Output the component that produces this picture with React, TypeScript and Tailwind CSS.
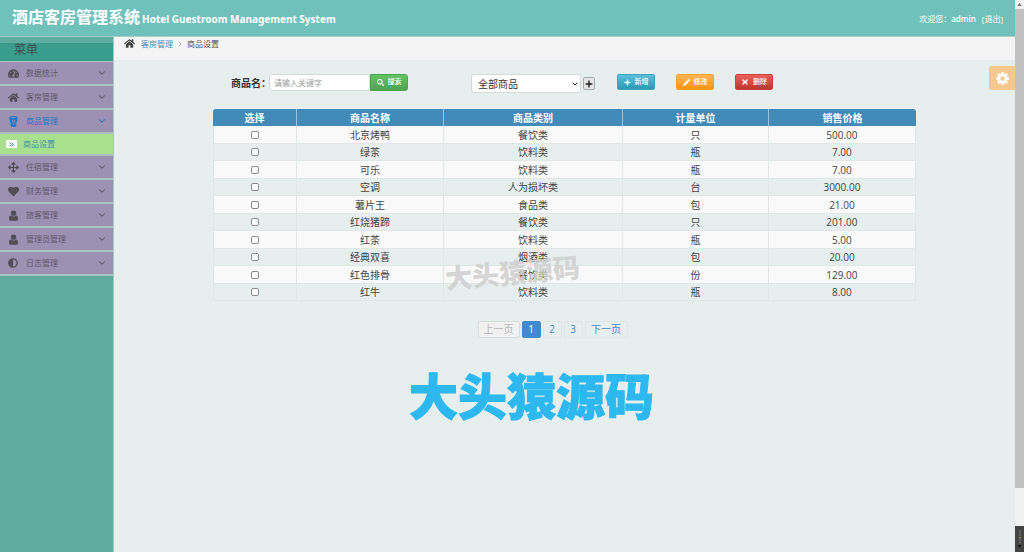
import { useState, type ReactNode } from "react";
import {
  FaAdjust,
  FaArrowsAlt,
  FaHeart,
  FaHome,
  FaPencilAlt,
  FaPlus,
  FaSearch,
  FaTachometerAlt,
  FaTimes,
} from "react-icons/fa";
import { ChevronDown, ChevronRight } from "lucide-react";

function BucketIcon() {
  return (
    <svg viewBox="0 0 22 26" className="size-[11px]" aria-hidden="true">
      <path
        fill="currentColor"
        fillRule="evenodd"
        d="M11 0C5 0 1 1.500 1 3.800c0 1 2 10.200 2.300 11.500C3.800 17 7 18.300 11 18.300s7.200-1.300 7.700-3C19 14 21 4.800 21 3.800 21 1.500 17 0 11 0Zm0 2.200c4 0 7 .8 7 1.400s-3 1.200-7 1.200-7-.6-7-1.200 3-1.400 7-1.400Zm0 5.900a3.700 3.700 0 1 1 0 7.400 3.700 3.700 0 0 1 0-7.400Z"
      />
      <circle cx="11" cy="11.800" r="2" fill="currentColor" />
      <path
        fill="currentColor"
        d="M3.500 17.500c2 1.400 4.700 2 7.500 2s5.500-.6 7.500-2l-1 5.500c-.5 1.800-3 2.800-6.500 2.800S5 24.800 4.500 23Z"
      />
    </svg>
  );
}

function UserIcon() {
  return (
    <svg viewBox="0 0 20 22" className="size-[11px]" aria-hidden="true">
      <path
        fill="currentColor"
        d="M10 1a5.500 5.500 0 0 1 5.500 5.500C15.500 9.600 13 12 10 12S4.500 9.600 4.500 6.500A5.500 5.500 0 0 1 10 1ZM5 11c1.300 1.400 3 2.200 5 2.200s3.700-.8 5-2.200c3 .2 4 3.400 4 7 0 2-1.300 3.300-3.300 3.300H4.300C2.300 21.300 1 20 1 18c0-3.600 1-6.800 4-7Z"
      />
    </svg>
  );
}

function CogIcon() {
  return (
    <svg viewBox="0 128 1536 1536" className="size-[13px]" aria-hidden="true">
      <path
        fill="currentColor"
        d="M1024 896q0-106-75-181t-181-75-181 75-75 181 75 181 181 75 181-75 75-181zm512-109v222q0 12-8 23t-20 13l-185 28q-19 54-39 91 35 50 107 138 10 12 10 25t-9 23q-27 37-99 108t-94 71q-12 0-26-9l-138-108q-44 23-91 38-16 136-29 186-7 28-36 28h-222q-14 0-24.500-8.500t-11.500-21.500l-28-184q-49-16-90-37l-141 107q-10 9-25 9-14 0-25-11-126-114-165-168-7-10-7-23 0-12 8-23 15-21 51-66.500t54-70.500q-27-50-41-99l-183-27q-13-2-21-12.500t-8-23.500v-222q0-12 8-23t19-13l186-28q14-46 39-92-40-57-107-138-10-12-10-24 0-10 9-23 26-36 98.500-107.500t94.500-71.500q13 0 26 10l138 107q44-23 91-38 16-136 29-186 7-28 36-28h222q14 0 24.500 8.500t11.500 21.500l28 184q49 16 90 37l142-107q9-9 24-9 13 0 25 10 129 119 165 170 7 8 7 22 0 12-8 23-15 21-51 66.500t-54 70.500q26 50 41 98l183 28q13 2 21 12.500t8 23.500z"
      />
    </svg>
  );
}

type MenuEntry = { label: string; icon: ReactNode; active?: boolean };

const menu: MenuEntry[] = [
  { label: "数据统计", icon: <FaTachometerAlt /> },
  { label: "客房管理", icon: <FaHome /> },
  { label: "商品管理", icon: <BucketIcon />, active: true },
  { label: "住宿管理", icon: <FaArrowsAlt /> },
  { label: "财务管理", icon: <FaHeart /> },
  { label: "旅客管理", icon: <UserIcon /> },
  { label: "管理员管理", icon: <UserIcon /> },
  { label: "日志管理", icon: <FaAdjust className="size-[10px]" /> },
];

const goods = [
  ["北京烤鸭", "餐饮类", "只", "500.00"],
  ["绿茶", "饮料类", "瓶", "7.00"],
  ["可乐", "饮料类", "瓶", "7.00"],
  ["空调", "人为损坏类", "台", "3000.00"],
  ["薯片王", "食品类", "包", "21.00"],
  ["红烧猪蹄", "餐饮类", "只", "201.00"],
  ["红茶", "饮料类", "瓶", "5.00"],
  ["经典双喜", "烟酒类", "包", "20.00"],
  ["红色排骨", "餐饮类", "份", "129.00"],
  ["红牛", "饮料类", "瓶", "8.00"],
];

function Header() {
  return (
    <header className="flex h-9 items-center justify-between bg-[#70c1bb] px-3 text-white">
      <h1 className="flex items-baseline gap-0.5 font-bold whitespace-nowrap">
        <span className="text-[16px] leading-5">酒店客房管理系统</span>
        <span className="font-['Noto_Sans',sans-serif] text-[10px] leading-5">
          Hotel Guestroom Management System
        </span>
      </h1>
      <p className="flex items-center pt-0.5 text-[8px] leading-3">
        <span>欢迎您：</span>
        <span className="font-semibold">admin</span>
        <a href="#logout" className="pl-1.5">[退出]</a>
      </p>
    </header>
  );
}

function MenuItem({ entry }: { entry: MenuEntry }) {
  return (
    <li>
      <button
        type="button"
        className={`flex h-6 w-full items-center border-b-2 border-[#abc4bf] bg-[#9c91b3] px-1.5 text-[8px] ${
          entry.active ? "text-[#1c77c8]" : "text-[#5d5868]"
        }`}
      >
        <span className={`mr-1.5 flex w-[14px] justify-center text-[11px] ${entry.active ? "" : "text-[#514f55]"}`}>
          {entry.icon}
        </span>
        <span className="flex-1 text-left">{entry.label}</span>
        <ChevronDown className="size-[10px]" strokeWidth={2.5} />
      </button>
      {entry.active && (
        <a
          href="#goods"
          className="flex h-[22px] items-center gap-1.5 border-b-2 border-[#abc4bf] bg-[#a9e08d] pl-1.5 text-[8px] text-[#4a90a4]"
        >
          <span className="flex h-[8px] w-[11px] items-center justify-center bg-white text-[#3b82b5]">
            <svg viewBox="0 0 8 8" className="size-[5px]" aria-hidden="true">
              <path d="M1 1l3 3-3 3M4 1l3 3-3 3" fill="none" stroke="currentColor" strokeWidth="1.500" />
            </svg>
          </span>
          商品设置
        </a>
      )}
    </li>
  );
}

function Sidebar() {
  return (
    <nav className="w-[114px] shrink-0 border-r border-[#abc4bf] bg-[#5faca0] pt-1.5">
      <h2 className="h-[19px] border-b border-[#abc4bf] bg-[#3a9c8e] pl-3.5 text-[12px] leading-[14px] text-[#40504c]">
        菜单
      </h2>
      <ul>
        {menu.map((entry) => (
          <MenuItem key={entry.label} entry={entry} />
        ))}
      </ul>
    </nav>
  );
}

const actionClass =
  "flex h-4 w-[38px] items-center justify-center gap-1 rounded-[2px] border text-[7px] font-medium text-white";

function Toolbar() {
  return (
    <div className="flex h-[35px] items-start pl-[18px] text-[10px]">
      <form className="flex items-center" onSubmit={(e) => e.preventDefault()}>
        <label htmlFor="keyword" className="w-[38px] pt-0.5 font-bold whitespace-nowrap text-[#333]">
          商品名：
        </label>
        <input
          id="keyword"
          type="text"
          placeholder="请输入关键字"
          className="h-[17px] w-[101px] rounded-l-[3px] border border-[#d5dad9] bg-white px-1 text-[8px] text-[#444] outline-none placeholder:text-[#999]"
        />
        <button
          type="submit"
          className="flex h-[17px] w-[38px] items-center justify-center gap-1 rounded-r-[3px] border border-[#4da54d] bg-linear-to-b from-[#62c462] to-[#51a351] text-[7px] font-medium text-white"
        >
          <FaSearch className="size-[7px]" />
          搜索
        </button>
      </form>
      <div className="ml-[63px] grid items-center">
        <select
          aria-label="商品类别"
          className="col-start-1 row-start-1 h-[19px] w-[110px] appearance-none rounded-[3px] border border-[#d5dad9] bg-white pt-0.5 pl-1.5 text-[10px] text-[#333]"
        >
          <option>全部商品</option>
          <option>餐饮类</option>
          <option>饮料类</option>
        </select>
        <ChevronDown
          className="pointer-events-none col-start-1 row-start-1 mr-0.5 size-[8px] justify-self-end text-[#222]"
          strokeWidth={3}
        />
      </div>
      <button
        type="button"
        aria-label="添加类别"
        className="mt-[3px] ml-0.5 flex h-[13px] w-[12px] items-center justify-center rounded-[2px] border border-[#aaa] bg-[#e4e4e4] text-[#222]"
      >
        <FaPlus className="size-[8px]" />
      </button>
      <div className="ml-[22px] flex gap-[21px]">
        <button type="button" className={`${actionClass} border-[#3fa3c0] bg-linear-to-b from-[#5bc0de] to-[#2f96b4]`}>
          <FaPlus className="size-[7px]" />
          新增
        </button>
        <button type="button" className={`${actionClass} border-[#f5a02a] bg-linear-to-b from-[#fbb450] to-[#f89406]`}>
          <FaPencilAlt className="size-[7px]" />
          修改
        </button>
        <button type="button" className={`${actionClass} border-[#c9413c] bg-linear-to-b from-[#ee5f5b] to-[#bd362f]`}>
          <FaTimes className="size-[8px]" />
          删除
        </button>
      </div>
    </div>
  );
}

function GoodsTable() {
  return (
    <div className="relative">
      <table className="w-full table-fixed border-separate border-spacing-0 text-center text-[10px] leading-[14px] text-[#444]">
        <thead>
          <tr className="h-[17px] text-white">
            <th className="w-[84px] rounded-tl-[3px] border-r border-[#9cc3d9] bg-[#428bb8] p-0">选择</th>
            <th className="w-[147px] border-r border-[#9cc3d9] bg-[#428bb8] p-0">商品名称</th>
            <th className="border-r border-[#9cc3d9] bg-[#428bb8] p-0">商品类别</th>
            <th className="w-[146px] border-r border-[#9cc3d9] bg-[#428bb8] p-0">计量单位</th>
            <th className="w-[147px] rounded-tr-[3px] bg-[#428bb8] p-0">销售价格</th>
          </tr>
        </thead>
        <tbody>
          {goods.map((row) => (
            <tr key={row[0]} className="odd:h-[18px] odd:bg-[#f9f9f9] even:h-[17px]">
              <td className="border-r border-b border-l border-[#e0e7e5] p-0">
                <input
                  type="checkbox"
                  aria-label={row[0]}
                  className="mx-auto block size-[8px] appearance-none rounded-[2px] border border-[#8a8a8a] bg-white checked:bg-[#428bb8]"
                />
              </td>
              {row.map((cell, i) => (
                <td key={i} className="border-r border-b border-[#e0e7e5] p-0">
                  {cell}
                </td>
              ))}
            </tr>
          ))}
        </tbody>
      </table>
      <p className="pointer-events-none absolute bottom-[12px] left-[33%] -rotate-5 text-[27px] leading-8 font-black whitespace-nowrap text-[#cfcfcf]/85">
        大头猿源码
      </p>
    </div>
  );
}

function Pagination() {
  const [page, setPage] = useState(1);
  return (
    <nav aria-label="分页" className="mt-5 mr-6 flex justify-center gap-0.5 text-[10px] text-[#428bca]">
      <button
        type="button"
        disabled={page === 1}
        onClick={() => setPage(page - 1)}
        className="h-[17px] w-[42px] rounded-[2px] border border-[#d8dcdb] bg-[#f1f1f1] leading-[15px] text-[#b5b5b5]"
      >
        上一页
      </button>
      {[1, 2, 3].map((n) => (
        <button
          key={n}
          type="button"
          onClick={() => setPage(n)}
          className={`h-[17px] w-[19px] rounded-[2px] border leading-[15px] ${
            n === page ? "border-[#428bca] bg-[#428bca] text-white" : "border-[#dfe7e5]"
          }`}
        >
          {n}
        </button>
      ))}
      <button
        type="button"
        disabled={page === 3}
        onClick={() => setPage(page + 1)}
        className="h-[17px] w-[43px] rounded-[2px] border border-[#dfe7e5] leading-[15px]"
      >
        下一页
      </button>
    </nav>
  );
}

function ScrollRail() {
  return (
    <div aria-hidden="true" className="flex w-[9px] shrink-0 flex-col bg-[#f1f1f1]">
      <div className="flex h-[9px] items-center justify-center">
        <svg viewBox="0 0 6 4" className="h-[3px] w-[5px]">
          <path d="M3 0l3 4H0z" fill="#777" />
        </svg>
      </div>
      <div className="flex-1 bg-[#c1c1c1]" />
      <div className="h-[38px]" />
      <div className="flex h-[26px] flex-col items-center justify-between bg-[#444] py-1">
        <div className="h-[6px] w-0.5 bg-[#5c5c5c]" />
        <div className="h-px w-0.5 bg-[#a98545]" />
        <div className="h-[6px] w-0.5 bg-[#5c5c5c]" />
        <svg viewBox="0 0 6 4" className="h-[3px] w-[5px]">
          <path d="M0 0h6L3 4z" fill="#1c1c1c" />
        </svg>
      </div>
    </div>
  );
}

export default function App() {
  return (
    <div className="flex min-h-screen bg-[#e6efed] font-['Open_Sans','Noto_Sans_CJK_SC',sans-serif]">
      <div className="flex min-w-0 flex-1 flex-col">
        <Header />
        <div className="flex flex-1 border-t border-[#a9cdc8]">
          <Sidebar />
          <main className="relative min-w-0 flex-1">
            <nav
              aria-label="面包屑"
              className="flex h-6 items-start border-b border-[#e9ecec] bg-[#f4f4f4] pt-px pl-2.5 text-[8px] leading-3 text-[#555]"
            >
              <FaHome className="mr-1.5 size-[11px] text-[#444]" />
              <a href="#rooms" className="text-[#4c8fbd]">客房管理</a>
              <ChevronRight className="mx-[3px] mt-0.5 size-[8px] text-[#aaa]" />
              <span>商品设置</span>
            </nav>
            <button
              type="button"
              aria-label="设置"
              className="absolute top-[29px] right-0 flex h-6 w-[26px] items-center justify-center rounded-l-[3px] bg-[#f5c98d] text-white"
            >
              <CogIcon />
            </button>
            <div className="px-[11%] pt-[13px]">
              <Toolbar />
              <GoodsTable />
              <Pagination />
              <p className="mt-[30px] mr-[66px] text-center text-[49px] leading-[56px] font-black text-[#2eb8f0] [-webkit-text-stroke:1px_#2eb8f0]">
                大头猿源码
              </p>
            </div>
          </main>
        </div>
      </div>
      <ScrollRail />
    </div>
  );
}
